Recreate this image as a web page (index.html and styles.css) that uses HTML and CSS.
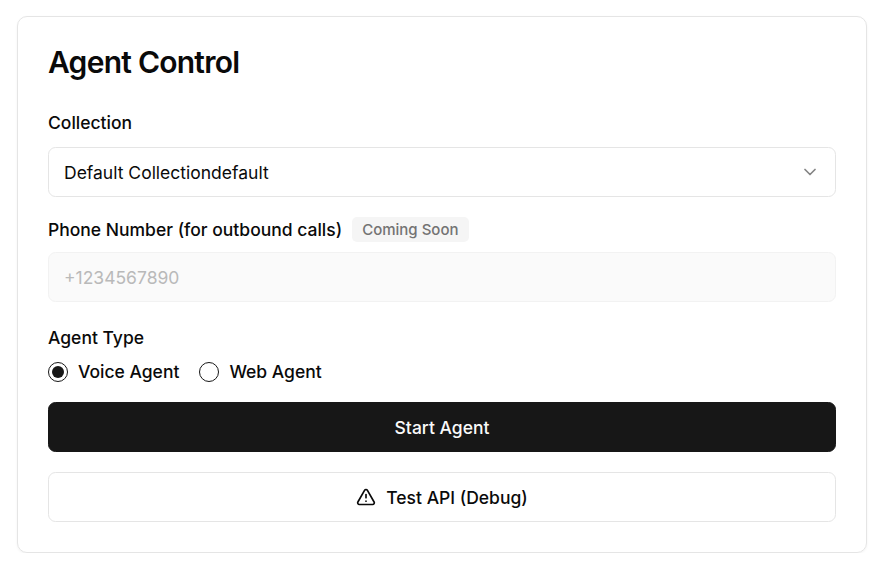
FILE: index.html
```html
<!DOCTYPE html>
<html lang="en">
<head>
<meta charset="utf-8">
<title>Agent Control</title>
<link rel="stylesheet" href="styles.css">
</head>
<body>
<main class="card">
  <h1 class="title">Agent Control</h1>
  <label class="label">Collection</label>
  <div class="field select">
    <span>Default Collectiondefault</span>
    <svg class="chevron" viewBox="0 0 24 24"><path d="m6 9 6 6 6-6"/></svg>
  </div>
  <div class="label-row">
    <label class="label" for="phone">Phone Number (for outbound calls)</label>
    <span class="badge">Coming Soon</span>
  </div>
  <input class="field phone" id="phone" placeholder="+1234567890" disabled>
  <div class="label type-label">Agent Type</div>
  <div class="radios">
    <div class="option"><span class="radio checked"></span><span>Voice Agent</span></div>
    <div class="option"><span class="radio"></span><span>Web Agent</span></div>
  </div>
  <button class="button primary">Start Agent</button>
  <button class="button outline">
    <svg class="warning" viewBox="0 0 24 24"><path d="m21.73 18-8-14a2 2 0 0 0-3.48 0l-8 14A2 2 0 0 0 4 21h16a2 2 0 0 0 1.73-3"/><path d="M12 9v4"/><path d="M12 17h.01"/></svg>
    <span>Test API (Debug)</span>
  </button>
</main>
</body>
</html>
```
FILE: styles.css
```css
* { box-sizing: border-box; }
body {
  margin: 0;
  padding: 16px 16px 0 17px;
  background: #fff;
  color: #0a0a0a;
  font: 500 17.5px/20px Inter, sans-serif;
}
.card {
  display: flex;
  flex-direction: column;
  height: 537px;
  padding: 30px;
  border: 1px solid #e5e5e5;
  border-radius: 10px;
  box-shadow: 0 1px 2.5px rgba(0, 0, 0, .05);
}
.title {
  margin: 0 0 36px;
  font-size: 30px;
  font-weight: 600;
  line-height: 30px;
  letter-spacing: -.75px;
}
.label { line-height: 20px; }
.field {
  width: 100%;
  height: 50px;
  padding: 0 15px;
  border: 1px solid #e5e5e5;
  border-radius: 7.5px;
  background: #fff;
  font: 400 17.5px/25px Inter, sans-serif;
}
.select {
  display: flex;
  align-items: center;
  justify-content: space-between;
  margin: 14px 0 20px;
}
svg { fill: none; stroke: currentColor; stroke-width: 2; stroke-linecap: round; stroke-linejoin: round; }
.chevron { width: 20px; height: 20px; opacity: .5; }
.label-row { display: flex; align-items: center; gap: 10px; height: 25px; margin-bottom: 10px; }
.badge {
  padding: 0 10px;
  border-radius: 5px;
  background: #f5f5f5;
  color: #737373;
  font-size: 15px;
  line-height: 25px;
}
.phone { background: #fafafa; border-color: #f2f2f2; }
.phone::placeholder { color: #b9b9b9; opacity: 1; }
.type-label { margin: 26px 0 14px; }
.radios { display: flex; gap: 20px; height: 20px; margin-bottom: 20px; }
.option { display: flex; align-items: center; gap: 10px; }
.radio {
  display: grid;
  place-items: center;
  width: 20px;
  height: 20px;
  border: 1px solid #171717;
  border-radius: 50%;
}
.checked::after { content: ""; width: 12px; height: 12px; border-radius: 50%; background: #171717; }
.button {
  display: flex;
  flex: none;
  align-items: center;
  justify-content: center;
  gap: 10px;
  width: 100%;
  height: 50px;
  border: 1px solid #171717;
  border-radius: 7.5px;
  font: 500 17.5px/25px Inter, sans-serif;
}
.primary { background: #171717; color: #fafafa; margin-bottom: 20px; }
.outline { background: #fff; border-color: #e5e5e5; color: #0a0a0a; }
.warning { width: 20px; height: 20px; }
```
